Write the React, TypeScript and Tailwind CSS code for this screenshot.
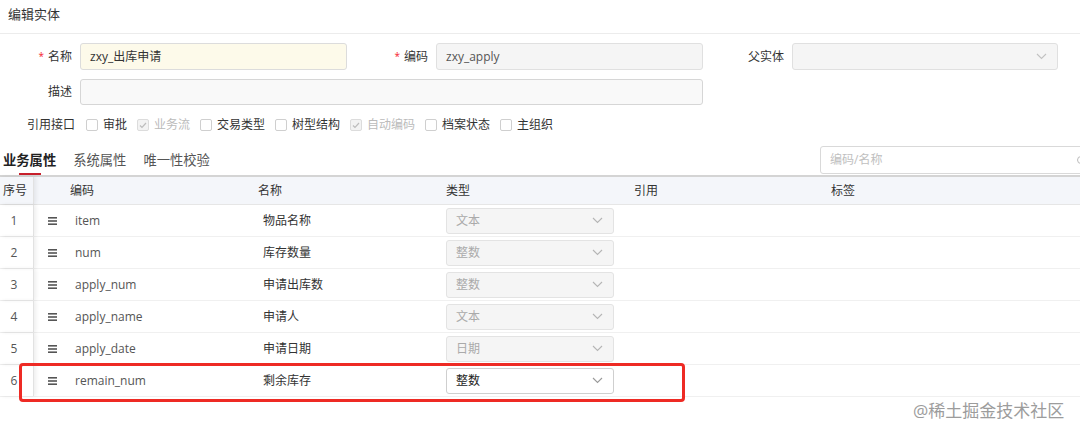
import React from "react"

const font = { fontFamily: '"Open Sans", "Noto Sans CJK SC", sans-serif' }

function Chevron({ color = "#b5b5b5" }: { color?: string }) {
  return (
    <svg width="11" height="7" viewBox="0 0 11 7" fill="none">
      <polyline points="1,1 5.5,5.5 10,1" stroke={color} strokeWidth="1.1" />
    </svg>
  )
}

function DragHandle() {
  return (
    <svg width="9" height="8" viewBox="0 0 9 8">
      <rect x="0" y="0" width="9" height="1.6" fill="#555" />
      <rect x="0" y="3.2" width="9" height="1.6" fill="#555" />
      <rect x="0" y="6.4" width="9" height="1.6" fill="#555" />
    </svg>
  )
}

function Check({ label, checked }: { label: string; checked?: boolean }) {
  return (
    <label className="flex items-center gap-[5px]">
      {checked ? (
        <span className="flex h-[12px] w-[12px] items-center justify-center rounded-[2px] border border-[#dcdcdc] bg-[#f3f3f3]">
          <svg width="8" height="7" viewBox="0 0 8 7" fill="none">
            <polyline points="1,3.5 3,5.5 7,1" stroke="#bdbdbd" strokeWidth="1.2" />
          </svg>
        </span>
      ) : (
        <span className="h-[12px] w-[12px] rounded-[2px] border border-[#cfcfcf] bg-white" />
      )}
      <span className={"text-[12px] " + (checked ? "text-[#bbbbbb]" : "text-[#333]")}>{label}</span>
    </label>
  )
}

function Label({ text, required, w }: { text: string; required?: boolean; w: string }) {
  return (
    <div className={"flex shrink-0 items-center justify-end pr-[8px] text-[12px] text-[#333] " + w}>
      {required && <span className="mr-[4px] text-[10px] text-[#f5222d]">*</span>}
      {text}
    </div>
  )
}

const rows = [
  { code: "item", name: "物品名称", type: "文本" },
  { code: "num", name: "库存数量", type: "整数" },
  { code: "apply_num", name: "申请出库数", type: "整数" },
  { code: "apply_name", name: "申请人", type: "文本" },
  { code: "apply_date", name: "申请日期", type: "日期" },
  { code: "remain_num", name: "剩余库存", type: "整数", active: true },
]

export default function App() {
  return (
    <div className="relative h-[426px] w-[1080px] overflow-hidden bg-white" style={font}>
      {/* header */}
      <div className="flex h-[34px] items-center border-b border-[#ececec] pb-[3px] pl-[8px] text-[13px] text-[#333]">
        编辑实体
      </div>

      {/* form */}
      <div className="flex flex-col pt-[9px]">
        <div className="flex h-[27px]">
          <Label text="名称" required w="w-[80px]" />
          <div className="flex w-[267px] items-center rounded-[3px] border border-[#dcdcdc] bg-[#fdfaea] pl-[9px] text-[12px] text-[#333]">
            zxy_出库申请
          </div>
          <Label text="编码" required w="w-[89px]" />
          <div className="flex w-[267px] items-center rounded-[3px] border border-[#e0e0e0] bg-[#f5f5f5] pl-[9px] text-[12px] text-[#555]">
            zxy_apply
          </div>
          <Label text="父实体" w="w-[89px]" />
          <div className="flex w-[266px] items-center justify-end rounded-[3px] border border-[#e0e0e0] bg-[#f5f5f5] pr-[10px]">
            <Chevron color="#c2c2c2" />
          </div>
        </div>
        <div className="mt-[9px] flex h-[26px]">
          <Label text="描述" w="w-[80px]" />
          <div className="w-[623px] rounded-[3px] border border-[#d6d6d6] bg-[#f9f9f9]" />
        </div>
        <div className="mt-[10px] flex h-[20px] items-center">
          <div className="flex w-[86px] shrink-0 justify-end pr-[11px] text-[12px] text-[#333]">引用接口</div>
          <div className="flex items-center gap-[10px]">
            <Check label="审批" />
            <Check label="业务流" checked />
            <Check label="交易类型" />
            <Check label="树型结构" />
            <Check label="自动编码" checked />
            <Check label="档案状态" />
            <Check label="主组织" />
          </div>
        </div>
      </div>

      {/* tabs */}
      <div className="flex h-[40px] items-end pl-[3px]">
        <div className="flex items-end gap-[17px]">
          <div className="flex flex-col items-center">
            <span className="text-[13.3px] leading-[20px] font-bold text-[#222]">业务属性</span>
            <span className="mt-[3px] h-[2px] w-[22px] bg-[#c8202c]" />
          </div>
          <div className="flex flex-col items-center">
            <span className="text-[13.3px] leading-[20px] text-[#555]">系统属性</span>
            <span className="mt-[3px] h-[2px] w-[22px]" />
          </div>
          <div className="flex flex-col items-center">
            <span className="text-[13.3px] leading-[20px] text-[#555]">唯一性校验</span>
            <span className="mt-[3px] h-[2px] w-[22px]" />
          </div>
        </div>
        <div className="mr-[-12px] mb-[1px] ml-auto flex h-[28px] w-[272px] items-center justify-between rounded-[3px] border border-[#d9d9d9] pr-[6px] pl-[9px]">
          <span className="text-[12px] text-[#c0c0c0]">编码/名称</span>
          <span className="h-[8px] w-[8px] rounded-full border border-[#bbb]" />
        </div>
      </div>
      <div className="h-[2px] bg-[#d4d4d4]" />

      {/* table */}
      <div className="flex h-[28px] items-center border-b border-[#e6e6e6] bg-[#f4f6fa] text-[12px] text-[#333]">
        <div className="flex h-full w-[34px] items-center border-r border-[#e2e2e2] pl-[3px] shadow-[2px_0_4px_rgba(0,0,0,0.07)]">
          序号
        </div>
        <div className="w-[28px]" />
        <div className="w-[188px] pl-[8px]">编码</div>
        <div className="w-[188px] pl-[8px]">名称</div>
        <div className="w-[188px] pl-[8px]">类型</div>
        <div className="w-[197px] pl-[8px]">引用</div>
        <div className="flex-1 pl-[8px]">标签</div>
      </div>
      {rows.map((r, i) => (
        <div key={r.code} className="flex h-[32px] items-center border-b border-[#f0f0f0] text-[12px] text-[#333]">
          <div className="flex h-full w-[34px] items-center justify-center border-r border-[#e2e2e2] pr-[5px] text-[#555] shadow-[2px_0_4px_rgba(0,0,0,0.07)]">
            {i + 1}
          </div>
          <div className="flex w-[28px] justify-end pr-[5px]">
            <DragHandle />
          </div>
          <div className="w-[188px] pl-[13px] text-[#555]">{r.code}</div>
          <div className="w-[188px] pl-[13px]">{r.name}</div>
          <div className="w-[188px] pl-[8px]">
            <div
              className={
                "flex h-[26px] w-[168px] items-center justify-between rounded-[3px] border pr-[10px] pl-[9px] " +
                (r.active ? "border-[#cfcfcf] bg-white text-[#222]" : "border-[#e3e3e3] bg-[#f5f5f5] text-[#aaa]")
              }
            >
              <span>{r.type}</span>
              <Chevron color={r.active ? "#9a9a9a" : "#b5b5b5"} />
            </div>
          </div>
          <div className="w-[197px]" />
          <div className="flex-1" />
        </div>
      ))}

      {/* annotation overlay */}
      <div className="absolute top-[363px] left-[19px] h-[39px] w-[666px] rounded-[4px] border-[3px] border-[#ee2a24]" />
      <div className="absolute top-[398px] left-[913px] text-[17px] text-[#9c9c9c]">@稀土掘金技术社区</div>
    </div>
  )
}
